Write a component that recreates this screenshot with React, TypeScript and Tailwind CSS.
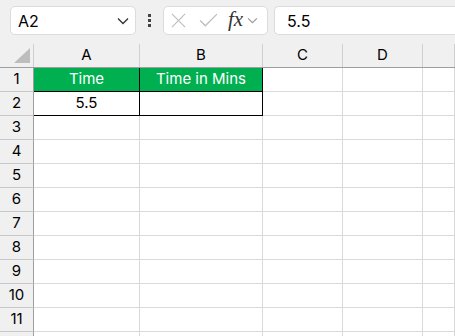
import React from "react";

const cols = [
  { name: "A", w: "w-[106px]" },
  { name: "B", w: "w-[123px]" },
  { name: "C", w: "w-[80px]" },
  { name: "D", w: "w-[80px]" },
  { name: "", w: "flex-1" },
];

function Chevron(p: { className?: string }) {
  return (
    <svg viewBox="0 0 12 8" className={p.className} fill="none" strokeWidth="1.3">
      <path d="M1 1.5 L6 6.5 L11 1.5" />
    </svg>
  );
}

function Cell(d: {
  w: string;
  green?: boolean;
  rb?: boolean;
  bb?: boolean;
  children?: React.ReactNode;
}) {
  return (
    <div
      className={
        d.w +
        " h-full shrink-0 flex items-center justify-center text-[15px] border-r border-b " +
        (d.green ? "bg-[#00b050] text-white " : "bg-white text-black ") +
        (d.rb ? "border-r-black " : "border-r-[#d9d9d9] ") +
        (d.bb ? "border-b-black" : "border-b-[#d9d9d9]")
      }
    >
      {d.children}
    </div>
  );
}

export default function App() {
  const rows = [1, 2, 3, 4, 5, 6, 7, 8, 9, 10, 11, 12];
  return (
    <div className="w-[455px] h-[336px] overflow-hidden bg-[#f0f0f0] font-['Inter','Noto_Sans',sans-serif]">
      {/* formula bar */}
      <div className="h-[44px] flex items-start pt-[6px] pl-[10px]">
        <div className="w-[126px] h-[29px] bg-white border border-[#dcdcdc] rounded-[5px] flex items-center justify-between pl-[7px] pr-[6px]">
          <span className="text-[16px] text-black">A2</span>
          <Chevron className="w-[12px] h-[8px] stroke-[#333]" />
        </div>
        <div className="w-[27px] h-[29px] flex flex-col items-center justify-center gap-[2px]">
          <div className="w-[3px] h-[3px] bg-[#444]" />
          <div className="w-[3px] h-[3px] bg-[#444]" />
          <div className="w-[3px] h-[3px] bg-[#444]" />
        </div>
        <div className="w-[105px] h-[29px] bg-white border border-[#dcdcdc] rounded-[5px] flex items-center pl-[7px]">
          <svg viewBox="0 0 16 16" className="w-[15px] h-[15px]" fill="none" stroke="#bdbdbd" strokeWidth="1.2">
            <path d="M1 1 L15 15 M15 1 L1 15" />
          </svg>
          <svg viewBox="0 0 18 14" className="w-[19px] h-[15px] ml-[13px]" fill="none" stroke="#bdbdbd" strokeWidth="1.2">
            <path d="M1 7 L6 12 L17 1" />
          </svg>
          <span className="ml-[10px] text-[21px] italic text-[#333] font-['Liberation_Serif',serif] leading-none pb-[3px]">
            fx
          </span>
          <Chevron className="ml-[4px] w-[11px] h-[7px] stroke-[#999]" />
        </div>
        <div className="ml-[6px] flex-1 h-[29px] bg-white border border-[#dcdcdc] border-r-0 rounded-l-[5px] flex items-center pl-[12px]">
          <span className="text-[16px] text-black">5.5</span>
        </div>
      </div>

      {/* column headers */}
      <div className="h-[24px] flex border-b border-[#9e9e9e]">
        <div className="w-[34px] shrink-0 h-full border-r border-[#d0d0d0] flex items-end justify-end pr-[3px] pb-[4px]">
          <div className="w-0 h-0 border-l-[16px] border-l-transparent border-b-[15px] border-b-[#bdbdbd]" />
        </div>
        {cols.map((c) => (
          <div
            key={c.name}
            className={c.w + " shrink-0 h-full border-r border-[#d0d0d0] flex items-center justify-center text-[15px] text-black"}
          >
            {c.name}
          </div>
        ))}
      </div>

      {/* rows */}
      {rows.map((r) => (
        <div key={r} className="h-[24px] flex">
          <div className="w-[34px] shrink-0 h-full border-r border-r-[#9e9e9e] border-b border-b-[#c8c8c8] flex items-center justify-center text-[15px] text-black">
            {r < 12 ? r : ""}
          </div>
          {cols.map((c, i) => {
            const table = r <= 2 && i < 2;
            return (
              <Cell
                key={c.name}
                w={c.w}
                green={r == 1 && i < 2}
                rb={table}
                bb={table}
              >
                {r == 1 && i == 0 ? "Time" : ""}
                {r == 1 && i == 1 ? "Time in Mins" : ""}
                {r == 2 && i == 0 ? "5.5" : ""}
              </Cell>
            );
          })}
        </div>
      ))}
    </div>
  );
}
